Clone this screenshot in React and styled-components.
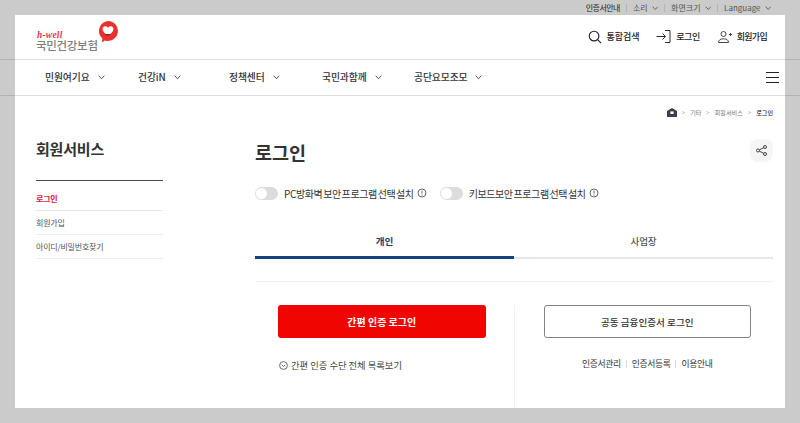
import React from 'react';
import styled, { createGlobalStyle } from 'styled-components';

const Global = createGlobalStyle`
  html, body { margin: 0; padding: 0; background: #cbcbcb; }
  * { box-sizing: border-box; }
  body { font-family: "Noto Sans CJK KR", "Noto Sans", sans-serif; color: #333; }
`;

const Page = styled.div`
  width: 800px; height: 423px; overflow: hidden; background: #cbcbcb;
  display: flex; flex-direction: column;
`;
const TopBar = styled.div`
  height: 15px; padding: 1px 29px 0 0; display: flex; justify-content: flex-end; align-items: center;
  font-size: 8px; color: #555; line-height: 14px;
`;
const TopItem = styled.span`
  display: flex; align-items: center; gap: 4px; color: ${p => p.$dark ? '#222' : '#555'};
  letter-spacing: ${p => p.$dark ? '-0.55px' : '0'};
`;
const TopSep = styled.i`
  width: 1px; height: 8px; background: #b5b5b5; margin: 0 6px;
`;
const Band = styled.div`
  border-bottom: 1px solid #b4b4b4; flex: none;
`;
const HeaderInner = styled.div`
  margin: 0 15px -1px; height: 45px; background: #fff; padding: 0 18px 1px 21px; border-bottom: 1px solid #dedede;
  display: flex; align-items: center; justify-content: space-between;
`;
const Logo = styled.div`
  position: relative; width: 84px; height: 22px; margin-top: 9px;
`;
const LogoSmall = styled.div`
  font-family: "Liberation Serif", serif; font-style: italic; font-weight: 700; font-size: 9.5px; line-height: 8px; color: #e8334a; margin: 1px 0 0 1px; letter-spacing: 0.2px;
`;
const LogoText = styled.div`
  font-size: 11.5px; line-height: 12px; color: #808080; font-weight: 500; letter-spacing: -0.3px; white-space: nowrap;
`;
const LogoMark = styled.svg`
  position: absolute; left: 61px; top: -10px;
`;
const Utils = styled.div`display: flex; align-items: center;`;
const Util = styled.a`
  display: flex; align-items: center; gap: 5px; margin-left: ${p => p.$gap || 0}px;
  font-size: 9px; font-weight: 500; color: #222; letter-spacing: ${p => p.$ls ?? -0.1}px;
`;
const NavInner = styled.div`
  margin: 0 15px -1px; height: 36px; background: #fff; padding: 0 6px 1px 0; border-bottom: 1px solid #dedede;
  display: flex; align-items: center; position: relative;
`;
const NavItem = styled.a`
  display: flex; align-items: center; gap: 8px; width: ${p => p.$w}px; flex: none; padding-left: ${p => p.$pl || 0}px;
  font-size: 9.8px; font-weight: 500; color: #333; white-space: nowrap; letter-spacing: -0.1px;
`;
const Burger = styled.div`
  margin-left: auto; width: 13px; display: flex; flex-direction: column; gap: 4px;
  i { display: block; height: 1px; background: #222; }
`;
const Main = styled.div`
  margin: 0 15px; height: 312px; background: #fff; position: relative; flex: none;
  display: flex; flex-direction: column; padding: 10px 12px 0 21px;
`;
const Crumbs = styled.div`
  display: flex; justify-content: flex-end; align-items: center; height: 12px; gap: 4px; font-size: 6.1px; color: #777;
  b { color: #222; font-weight: 500; }
  em { font-style: normal; color: #999; margin: 0 1px; }
`;
const Columns = styled.div`display: flex; flex: 1; min-height: 0;`;
const Side = styled.aside`
  width: 127px; flex: none; margin-right: 92px; padding-top: 20px;
`;
const SideTitle = styled.h2`
  margin: 0; font-size: 15px; line-height: 22px; font-weight: 700; color: #333; height: 43px; border-bottom: 1px solid #4a4a58; letter-spacing: -0.2px;
`;
const SideItem = styled.a`
  display: block; height: ${p => p.$h || 24}px; line-height: 23px; font-size: 8px; letter-spacing: -0.2px;
  padding-top: ${p => p.$pt || 0}px;
  color: ${p => p.$on ? '#d8163c' : '#555'}; font-weight: ${p => p.$on ? 700 : 400};
  border-bottom: 1px solid ${p => p.$on ? '#e4e4ea' : '#ececf0'};
`;
const Content = styled.section`flex: 1; min-width: 0; display: flex; flex-direction: column;`;
const TitleRow = styled.div`
  display: flex; justify-content: space-between; align-items: flex-start; height: 68px; padding-top: 21px;
`;
const Title = styled.h1`
  margin: -1px 0 0; font-size: 18.5px; line-height: 28px; font-weight: 700; color: #333;
`;
const Share = styled.div`
  width: 23px; height: 23px; border-radius: 8px; background: #f5f5f5; display: flex; align-items: center; justify-content: center;
`;
const Toggles = styled.div`display: flex; align-items: center; height: 14px;`;
const Toggle = styled.div`
  width: 23px; height: 13px; border-radius: 7px; background: #dcdcdc; padding: 1px; margin-right: 6px; flex: none;
  &::before { content: ""; display: block; width: 11px; height: 11px; border-radius: 50%; background: #fff; }
`;
const ToggleLabel = styled.span`
  display: flex; align-items: center; gap: 3px; font-size: 10px; letter-spacing: -0.4px; word-spacing: -1px; color: #333; margin-right: ${p => p.$mr || 0}px; white-space: nowrap;
`;
const Tabs = styled.div`display: flex; margin-top: 26px; height: 56px;`;
const Tab = styled.div`
  flex: 1; text-align: center; font-size: 9.6px; line-height: 30px; font-weight: ${p => p.$on ? 700 : 500};
  color: ${p => p.$on ? '#14407a' : '#555'};
  border-bottom: ${p => p.$on ? '3px solid #14427f' : '2px solid #e6e6e6'};
  height: 33px; letter-spacing: -0.2px;
`;
const Rule = styled.div`height: 1px; background: #f1f1f1; margin-top: -1px;`;
const Login = styled.div`display: flex; flex: 1; margin-top: 23px;`;
const Pane = styled.div`
  flex: 1;
  ${p => p.$left ? 'border-right: 1px solid #f1f1f1; padding: 0 28px 0 23px;' : 'padding: 0 22px 0 29px;'}
`;
const BtnRed = styled.button`
  display: block; width: 100%; height: 33px; border: 0; border-radius: 3px; background: #f10500; color: #fff;
  font: 700 10px "Noto Sans CJK KR", sans-serif;
`;
const BtnLine = styled.button`
  display: block; width: 100%; height: 33px; border: 1px solid #80848e; border-radius: 3px; background: #fff; color: #333;
  font: 500 9.6px "Noto Sans CJK KR", sans-serif;
`;
const More = styled.div`
  display: flex; align-items: center; gap: 3px; margin-top: 19px; padding-left: 1px; font-size: 9.3px; color: #444; line-height: 16px; white-space: nowrap;
`;
const Links = styled.div`
  display: flex; justify-content: center; align-items: center; margin-top: 18px; font-size: 8.8px; letter-spacing: -0.35px; color: #333; line-height: 16px;
  i { width: 1px; height: 8px; background: #ddd; margin: 0 5px; }
`;

const Chev = ({ s = 6.5, c = '#555' }) => (
  <svg width={s} height={s * 0.7} viewBox="0 0 10 7" fill="none" stroke={c} strokeWidth="1.3"><path d="M1 1l4 4.4L9 1" /></svg>
);
const Info = () => (
  <svg width="10" height="10" viewBox="0 0 10 10" fill="none" stroke="#444" strokeWidth="0.8"><circle cx="5" cy="5" r="4" /><path d="M5 2.6v3.2M5 6.6v.9" /></svg>
);

export default function App() {
  return (
    <Page>
      <Global />
      <TopBar>
        <TopItem $dark>인증서안내</TopItem><TopSep />
        <TopItem>소리 <Chev /></TopItem><TopSep />
        <TopItem>화면크기 <Chev /></TopItem><TopSep />
        <TopItem>Language <Chev /></TopItem>
      </TopBar>
      <Band>
        <HeaderInner>
          <Logo>
            <LogoSmall>h-well</LogoSmall>
            <LogoText>국민건강보험</LogoText>
            <LogoMark width="22" height="24" viewBox="0 0 22 24">
              <path d="M11 1a10 10 0 1 1-3.2 19.5L5 22.5l.3-4.2A10 10 0 0 1 11 1z" fill="#e8302f" />
              <path d="M11 15.5C8 13.5 5.5 11.5 5.5 9c0-1.6 1.2-2.8 2.8-2.8 1.1 0 2.1.6 2.7 1.6.6-1 1.6-1.6 2.7-1.6 1.6 0 2.8 1.2 2.8 2.8 0 2.5-2.5 4.5-5.5 6.5z" fill="#fff" />
              <path d="M7.5 14h6l-2.5 2z" fill="#8e1a24" />
            </LogoMark>
          </Logo>
          <Utils>
            <Util>
              <svg width="14" height="14" viewBox="0 0 15 15" fill="none" stroke="#222" strokeWidth="1.2"><circle cx="6.5" cy="6.5" r="5.2" /><path d="M10.3 10.3l3.7 3.7" /></svg>
              통합검색
            </Util>
            <Util $gap={17} $ls={-0.5}>
              <svg width="15" height="13" viewBox="0 0 15 13" fill="none" stroke="#333" strokeWidth="1"><path d="M0.5 6.5h9M6.5 3.5l3 3-3 3M9 .5h5v12H9" /></svg>
              로그인
            </Util>
            <Util $gap={18} $ls={-0.7}>
              <svg width="14" height="12" viewBox="0 0 14 12" fill="none" stroke="#333" strokeWidth="0.9"><circle cx="5.5" cy="3" r="2.5" /><path d="M.5 11.5c0-2.5 2-3.7 5-3.7s5 1.2 5 3.7zM11 3.5h3M12.5 2v3" /></svg>
              회원가입
            </Util>
          </Utils>
        </HeaderInner>
      </Band>
      <Band>
        <NavInner>
          <NavItem $w={123} $pl={30}>민원여기요 <Chev s={7} c="#444" /></NavItem>
          <NavItem $w={91}>건강iN <Chev s={7} c="#444" /></NavItem>
          <NavItem $w={93}>정책센터 <Chev s={7} c="#444" /></NavItem>
          <NavItem $w={92}>국민과함께 <Chev s={7} c="#444" /></NavItem>
          <NavItem $w={100}>공단요모조모 <Chev s={7} c="#444" /></NavItem>
          <Burger><i /><i /><i /></Burger>
        </NavInner>
      </Band>
      <Main>
        <Crumbs>
          <svg width="10" height="9" viewBox="0 0 10 9"><path d="M5 0l5 3v6H0V3z" fill="#3d3d4d" /><rect x="3.4" y="3.4" width="3.2" height="2.6" fill="#fff" /></svg>
          <em>&gt;</em><span>기타</span><em>&gt;</em><span>회원서비스</span><em>&gt;</em><b>로그인</b>
        </Crumbs>
        <Columns>
          <Side>
            <SideTitle>회원서비스</SideTitle>
            <SideItem $on $h={30} $pt={6}>로그인</SideItem>
            <SideItem>회원가입</SideItem>
            <SideItem>아이디/비밀번호찾기</SideItem>
          </Side>
          <Content>
            <TitleRow>
              <Title>로그인</Title>
              <Share>
                <svg width="11" height="11" viewBox="0 0 11 11" fill="none" stroke="#333" strokeWidth="0.9"><circle cx="2" cy="5.5" r="1.5" /><circle cx="9" cy="2" r="1.5" /><circle cx="9" cy="9" r="1.5" /><path d="M3.4 4.8l4.3-2.1M3.4 6.2l4.3 2.1" /></svg>
              </Share>
            </TitleRow>
            <Toggles>
              <Toggle />
              <ToggleLabel $mr={13}>PC방화벽 보안 프로그램 선택 설치 <Info /></ToggleLabel>
              <Toggle />
              <ToggleLabel>키보드보안 프로그램 선택 설치 <Info /></ToggleLabel>
            </Toggles>
            <Tabs>
              <Tab $on>개인</Tab>
              <Tab>사업장</Tab>
            </Tabs>
            <Rule />
            <Login>
              <Pane $left>
                <BtnRed>간편 인증 로그인</BtnRed>
                <More>
                  <svg width="9" height="9" viewBox="0 0 9 9" fill="none" stroke="#444" strokeWidth="0.8"><circle cx="4.5" cy="4.5" r="3.9" /><path d="M2.8 3.8l1.7 1.7 1.7-1.7" /></svg>
                  간편 인증 수단 전체 목록보기
                </More>
              </Pane>
              <Pane>
                <BtnLine>공동 금융인증서 로그인</BtnLine>
                <Links>인증서관리<i />인증서등록<i />이용안내</Links>
              </Pane>
            </Login>
          </Content>
        </Columns>
      </Main>
    </Page>
  );
}
